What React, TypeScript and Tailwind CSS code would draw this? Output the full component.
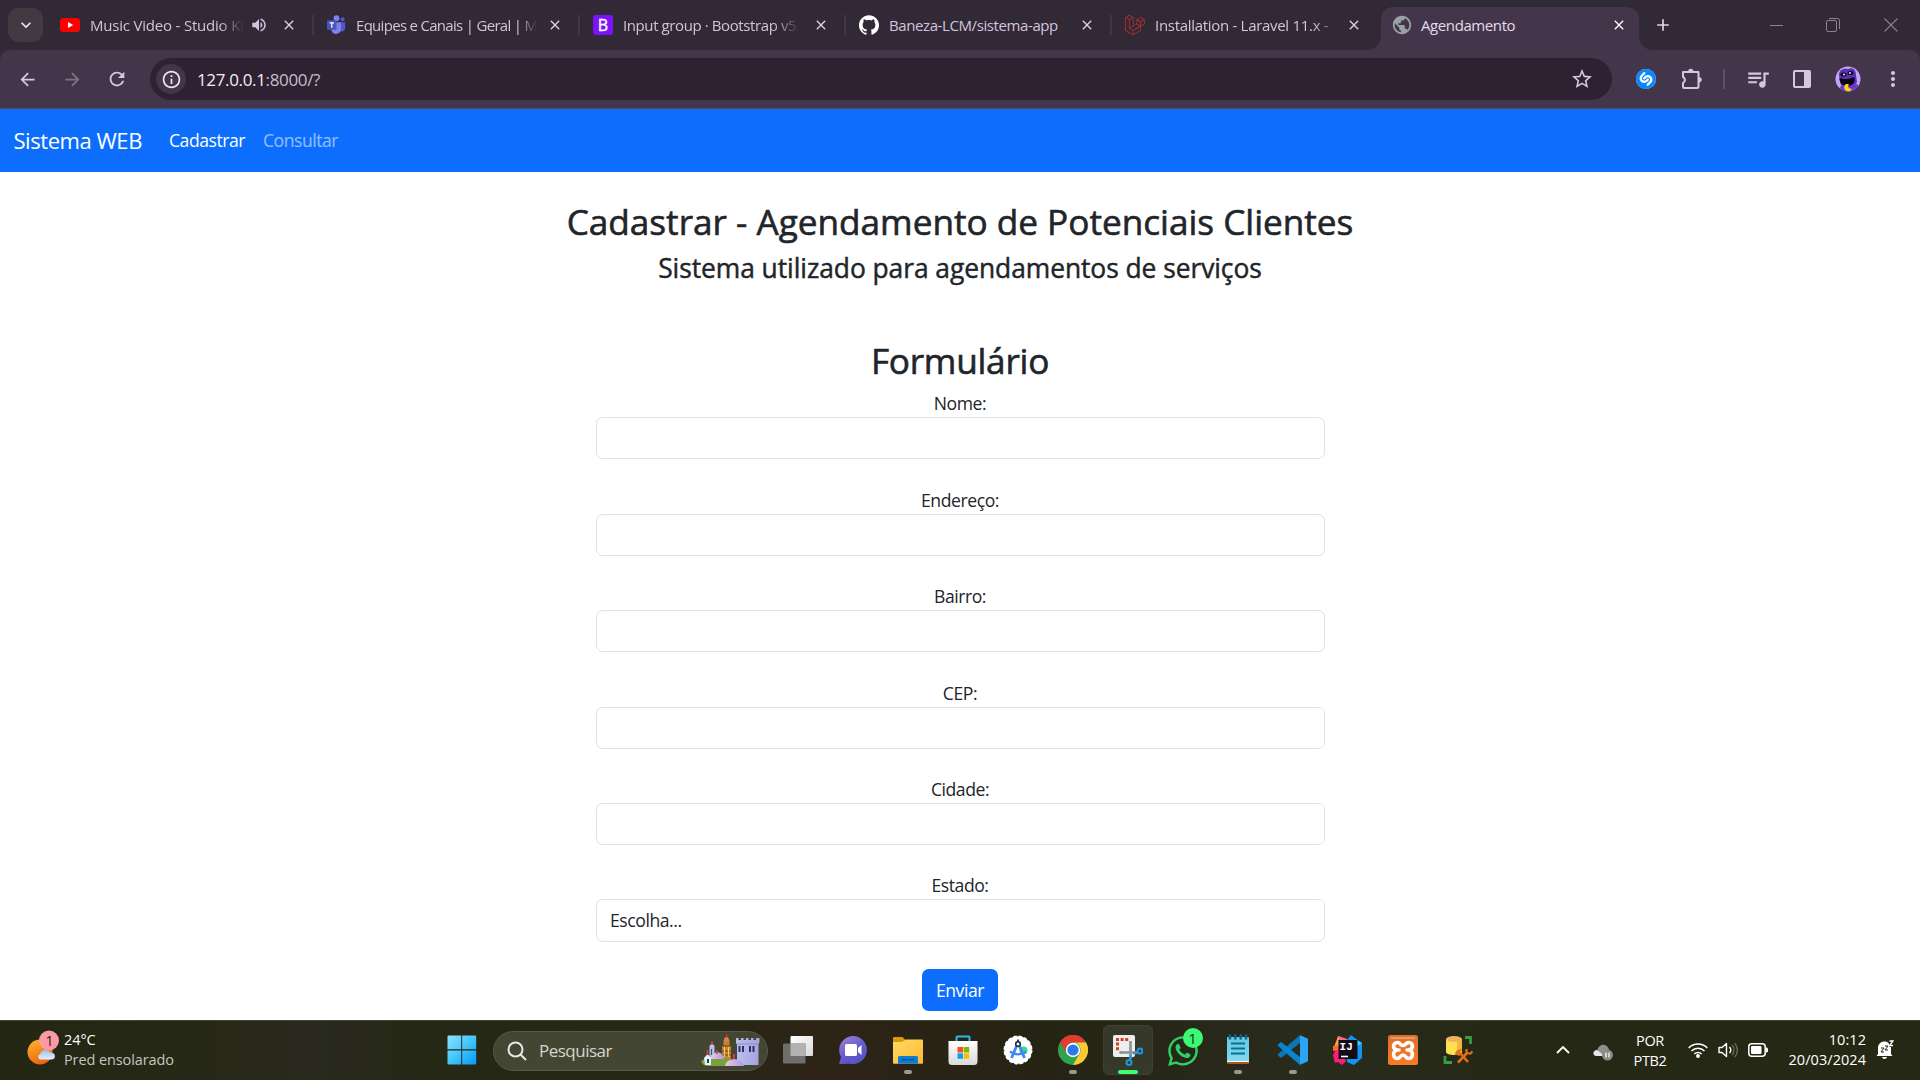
import type { ReactNode } from "react";
import { MdArrowBack, MdArrowForward, MdRefresh, MdInfoOutline, MdStarBorder, MdPublic, MdVolumeUp, MdQueueMusic, MdMoreVert, MdClose, MdAdd, MdKeyboardArrowDown } from "react-icons/md";
import { SiGithub, SiLaravel, SiShazam } from "react-icons/si";
import { FaWhatsapp } from "react-icons/fa";

const YouTube = () => (
  <svg width="20" height="20" viewBox="0 0 20 20"><rect y="3" width="20" height="14" rx="3.5" fill="#f00" /><path d="M8 7l5.2 3L8 13z" fill="#fff" /></svg>
);

const Teams = () => (
  <svg width="20" height="20" viewBox="0 0 20 20" className="-ml-px">
    <circle cx="10.5" cy="3.2" r="2.9" fill="#7b83eb" /><circle cx="16.6" cy="4.3" r="2" fill="#5059c9" />
    <path d="M13 7.2h6.2v6a3.3 3.3 0 0 1-6.2 1.6z" fill="#5059c9" /><path d="M6 7.2h9v7a5 5 0 0 1-9.6 1.6z" fill="#7b83eb" />
    <rect x="1" y="5.3" width="9.5" height="9.5" rx="1" fill="#4b53bc" />
    <path d="M3.6 7.8h4.4M5.8 7.8v5" stroke="#fff" strokeWidth="1.2" />
  </svg>
);

const BootstrapLogo = () => (
  <div className="grid h-5 w-5 place-items-center rounded-[3px] bg-[#7b12f8] text-[16px] leading-none text-white [-webkit-text-stroke:0.4px]">B</div>
);

const Globe = () => <MdPublic size={22} className="-mx-px text-[#9aa0a6]" />;

type TabProps = { icon: ReactNode; title: string; tracking: string; fade?: string; sound?: boolean; width: string };

function Tab({ icon, title, tracking, fade, sound, width }: TabProps) {
  return (
    <div className={`flex h-[50px] shrink-0 items-center pl-[13px] ${width}`}>
      {icon}
      <div className="ml-[10px] flex h-6 w-[179px] items-center">
        <div className={`text-[15px] leading-6 whitespace-nowrap text-[#d5c2dc] ${tracking} ${fade ?? ""}`}>{title}</div>
      </div>
      {sound && <MdVolumeUp size={18} className="-ml-[19px] text-[#d5c2dc]" />}
      <MdClose size={16} className="ml-auto mr-[15px] shrink-0 text-[#e0d0e6]" />
      <div className="h-5 w-0.5 bg-[#43383f]" />
    </div>
  );
}

function TabStrip() {
  return (
    <div className="flex h-[50px] items-center bg-[#312936]">
      <div className="ml-2 mr-1 grid h-[34px] w-[35px] shrink-0 place-items-center rounded-[11px] bg-[#423a42]">
        <MdKeyboardArrowDown size={20} className="text-[#eee6ef]" />
      </div>
      <Tab icon={<YouTube />} title="Music Video - Studio Ki" tracking="tracking-[-0.2px]" fade="mask-r-from-84%" sound width="w-[267px]" />
      <Tab icon={<Teams />} title="Equipes e Canais | Geral | M" tracking="tracking-[-0.7px]" fade="mask-r-from-90%" width="w-[266px]" />
      <Tab icon={<BootstrapLogo />} title="Input group · Bootstrap v5." tracking="tracking-[-0.4px]" fade="mask-r-from-85%" width="w-[266px]" />
      <Tab icon={<SiGithub size={20} className="shrink-0 text-white" />} title="Baneza-LCM/sistema-app" tracking="tracking-[-0.4px]" width="w-[266px]" />
      <div className="mr-px flex h-[50px] w-[268px] shrink-0 items-center pl-[13px]">
        <SiLaravel size={20} className="shrink-0 text-[#d32f2b]" />
        <div className="ml-[10px] text-[15px] tracking-[-0.3px] whitespace-nowrap text-[#d5c2dc] mask-r-from-90% mask-r-to-[110%]">Installation - Laravel 11.x -</div>
        <MdClose size={16} className="mr-[18px] ml-auto shrink-0 text-[#e0d0e6]" />
      </div>
      <div className="relative mt-[7px] flex h-[43px] w-[258px] shrink-0 items-center rounded-t-xl bg-[#43364a] pb-[7px] pl-[11px]">
        <div className="absolute bottom-0 -left-[14px] h-[14px] w-[14px] bg-[#43364a]"><div className="h-full rounded-br-[14px] bg-[#312936]" /></div>
        <div className="absolute -right-[14px] bottom-0 h-[14px] w-[14px] bg-[#43364a]"><div className="h-full rounded-bl-[14px] bg-[#312936]" /></div>
        <Globe />
        <div className="ml-[9px] text-[15px] tracking-[-0.4px] text-[#e6d9ea]">Agendamento</div>
        <MdClose size={16} className="mr-[12px] ml-auto text-white" />
      </div>
      <MdAdd size={20} className="ml-[14px] text-[#e0d6e2]" />
      <div className="mr-[22px] ml-auto flex items-center">
        <div className="h-px w-[13px] bg-[#8b848e]" />
        <svg width="14" height="14" viewBox="0 0 14 14" fill="none" stroke="#8b848e" className="ml-[43px]"><rect x=".5" y="2.5" width="10" height="11" rx="1.5" /><path d="M3 .5h8.500a2 2 0 0 1 2 2V11" /></svg>
        <svg width="14" height="14" viewBox="0 0 14 14" stroke="#8b848e" strokeWidth="1.1" className="ml-[44px]"><path d="M.5.5l13 13M13.500.5l-13 13" /></svg>
      </div>
    </div>
  );
}

const Puzzle = () => (
  <svg width="22" height="22" viewBox="0 0 22 22" fill="none" stroke="#d8c6df" strokeWidth="2" strokeLinejoin="round">
    <path d="M2 4h15.500v14.500a1.500 1.500 0 0 1-1.500 1.500H3.500A1.500 1.500 0 0 1 2 18.500V15a3.300 3.300 0 0 0 0-6z" />
    <path d="M7.500 3.500a2.300 2.300 0 0 1 4.600 0zM18 9.500a2.300 2.300 0 0 1 0 4.600z" fill="#d8c6df" strokeWidth="1" />
  </svg>
);

const Avatar = () => (
  <svg width="26" height="26" viewBox="0 0 26 26">
    <clipPath id="av"><circle cx="13" cy="13" r="12.500" /></clipPath>
    <g clipPath="url(#av)">
      <rect width="26" height="26" fill="#c7a3f5" />
      <path d="M4 9C4 4 8 2 13 3c5-2 8 1 8 6l1 7-5 9H8l-3-9z" fill="#5c30b5" />
      <path d="M5 26c-1-5 1-7 5-8l9-1c5 1 6 5 5 9z" fill="#7136cf" />
      <path d="M4.500 12c6 2 10 1 15-1 1 6-2 9-7 9-5 0-8-3-8-8z" fill="#080310" />
      <ellipse cx="8.500" cy="8.500" rx="3" ry="2" fill="#0c0618" /><ellipse cx="15.500" cy="7" rx="3" ry="2" fill="#0c0618" />
      <circle cx="9" cy="8.500" r=".9" fill="#fff" /><circle cx="15" cy="7" r=".9" fill="#fff" />
      <path d="M11 18a4 4 0 1 0 6 4.500c-3 1-5-1.500-3-4.500z" fill="#f9d90b" />
    </g>
  </svg>
);

function Toolbar() {
  return (
    <div className="bg-[#312936]">
      <div className="flex h-[59px] items-center rounded-t-[10px] border-b border-[#554a50] bg-[#43364a] text-[#d8c6df]">
        <MdArrowBack size={21} className="ml-[17px]" />
        <MdArrowForward size={21} className="ml-[24px] text-[#7f7385]" />
        <MdRefresh size={22} className="ml-[23px]" />
        <div className="ml-[22px] flex h-[42px] w-[1462px] items-center rounded-full bg-[#2e2132]">
          <div className="ml-[6px] grid h-[30px] w-[30px] place-items-center rounded-full bg-[#43364a]"><MdInfoOutline size={21} className="text-[#eee3f0]" /></div>
          <div className="ml-[11px] pt-px text-[17px] tracking-[-0.35px] text-[#c9bccd]"><span className="text-[#f4edf5]">127.0.0.1</span>:8000/?</div>
          <MdStarBorder size={24} className="mr-[18px] ml-auto" />
        </div>
        <div className="ml-[24px] h-[20px] w-[20px] rounded-full bg-white"><SiShazam size={20} className="text-[#0a88ff]" /></div>
        <div className="ml-[25px]"><Puzzle /></div>
        <div className="ml-[20px] h-5 w-0.5 bg-[#5e5065]" />
        <MdQueueMusic size={26} className="ml-[20px]" />
        <svg width="18" height="18" viewBox="0 0 18 18" className="ml-[22px]"><rect x="1" y="1" width="16" height="16" rx="1" fill="none" stroke="#d8c6df" strokeWidth="2" /><path d="M11 1h6v16h-6z" fill="#d8c6df" /></svg>
        <div className="ml-[24px]"><Avatar /></div>
        <MdMoreVert size={24} className="ml-[20px]" />
      </div>
    </div>
  );
}

function Navbar() {
  return (
    <nav className="flex h-[63px] items-center bg-[#0d6efd] pl-[13.500px] text-white">
      <div className="w-[155.500px] text-[22px] tracking-[-0.45px] whitespace-nowrap">Sistema WEB</div>
      <div className="w-[94px] text-[17.6px] tracking-[-0.48px]">Cadastrar</div>
      <div className="text-[17.6px] tracking-[-0.48px] text-white/55">Consultar</div>
    </nav>
  );
}

const fields = ["Nome:", "Endereço:", "Bairro:", "CEP:", "Cidade:"];

function Page() {
  return (
    <main className="flex h-[848px] flex-col items-center bg-white pt-[28px] text-[#212529]">
      <h1 className="text-[35.2px] leading-[42px] tracking-[-0.02px] [-webkit-text-stroke:0.6px]">Cadastrar - Agendamento de Potenciais Clientes</h1>
      <h2 className="mt-[10px] text-[26.4px] leading-[32px] tracking-[-0.06px] [-webkit-text-stroke:0.45px]">Sistema utilizado para agendamentos de serviços</h2>
      <h1 className="mt-[55px] text-[35.2px] leading-[42px] tracking-[-0.25px] [-webkit-text-stroke:0.6px]">Formulário</h1>
      <form className="mt-[9px] ml-px flex w-[729px] flex-col items-center text-[17.6px] leading-[26px] tracking-[-0.44px]">
        {fields.map((f) => (
          <div key={f} className="flex h-[96.500px] w-full flex-col items-center">
            <label className="-ml-px">{f}</label>
            <input className="mt-px h-[42px] w-full rounded-[6.600px] border border-[#dee2e6]" />
          </div>
        ))}
        <label className="-mt-px -ml-px">Estado:</label>
        <div className="mt-px flex h-[43px] w-full items-center rounded-[6.600px] border border-[#dee2e6] pl-[13px]">Escolha...</div>
        <button type="button" className="mt-[27px] -ml-px h-[42px] w-[76px] rounded-[6.600px] bg-[#0d6efd] text-white">Enviar</button>
      </form>
    </main>
  );
}

const Weather = () => (
  <svg width="34" height="36" viewBox="0 0 34 36" className="shrink-0">
    <defs>
      <linearGradient id="sun" x2=".4" y2="1"><stop stopColor="#f9b931" /><stop offset="1" stopColor="#f0650d" /></linearGradient>
      <linearGradient id="cl" y2="1" x2="0"><stop stopColor="#9cc1ee" /><stop offset="1" stopColor="#e3eefc" /></linearGradient>
    </defs>
    <circle cx="13" cy="22" r="12.500" fill="url(#sun)" />
    <path d="M13 29.500a3 3 0 0 1 0-5.500c2-5 8-5 10-1.500 6-.5 6.500 6.500 2 7z" fill="url(#cl)" />
    <circle cx="22" cy="10.500" r="10" fill="#fc9aa3" />
    <text x="22.500" y="15.500" textAnchor="middle" fontSize="14" fill="#222">1</text>
  </svg>
);

const WindowsLogo = () => (
  <svg width="30" height="30" viewBox="0 0 30 30">
    <defs><linearGradient id="wn" x2="1" y2="1"><stop stopColor="#8ae4fd" /><stop offset=".55" stopColor="#3cc2fc" /><stop offset="1" stopColor="#0896fb" /></linearGradient></defs>
    <path d="M.5 1.500a1 1 0 0 1 1-1H14.200V14.200H.5zM15.200.5h13a1 1 0 0 1 1 1v12.700h-14zM.5 15.500H14.200v14H1.500a1 1 0 0 1-1-1zM15.200 15.500h14v13a1 1 0 0 1-1 1h-13z" fill="url(#wn)" />
  </svg>
);

const Castle = () => (
  <svg width="59" height="33" viewBox="0 0 59 33">
    <defs>
      <linearGradient id="cw"><stop stopColor="#b9c0ee" /><stop offset="1" stopColor="#a9a0e0" /></linearGradient>
      <linearGradient id="dome"><stop stopColor="#f0c6df" /><stop offset="1" stopColor="#a89ae0" /></linearGradient>
    </defs>
    <path d="M8.500 12l2.500-3 2.500 3v14h-5z" fill="#b5c8e8" /><path d="M11 7v4" stroke="#dc3b58" strokeWidth="1.500" /><path d="M10.500 15v6" stroke="#3d4c83" strokeWidth="1.200" />
    <path d="M22.500 7h6v5h1.500v14h-9V12h1.500z" fill="#c18331" /><path d="M22 12h7M21 17h9M21 21h9" stroke="#6c3c2a" /><path d="M24 3h3l1.500 4h-6z" fill="#e3833a" /><path d="M25.500 0v4" stroke="#d43256" strokeWidth="1.200" />
    <path d="M23.500 13v10M27.500 13v10" stroke="#f8ce4f" strokeWidth="1.200" />
    <path d="M0 27c5-4 16-4 28-2l4 7H8c-5 0-7-2-8-5z" fill="#79a23b" />
    <path d="M10 25c1-9 12-9 13 0z" fill="url(#dome)" /><path d="M16 16v4" stroke="#dc3b58" strokeWidth="1.600" />
    <path d="M3 24l3.500-4 3.500 4v7H4z" fill="#e3f2fb" /><path d="M6.500 16v5" stroke="#dc3b58" strokeWidth="1.600" /><path d="M7 25v4" stroke="#263c70" strokeWidth="2" />
    <path d="M35 4h2.500v2H40V4h2.500v2H45V4h2.500v2H50V4h2.500v2H55V4h3.500v4l-1 3v20H36V11l-1-2z" fill="url(#cw)" /><path d="M36 10h22" stroke="#8088c4" strokeWidth=".8" />
    <path d="M38.500 12v6M42 12v6M49 12v6M52.500 12v6" stroke="#263064" strokeWidth="2" />
    <path d="M24 32c1-9 17-9 19 0z" fill="url(#dome)" /><path d="M33 20v5" stroke="#dc3b58" strokeWidth="1.800" />
  </svg>
);

const TaskView = () => (
  <svg width="30" height="30" viewBox="0 0 30 30">
    <defs><linearGradient id="tv" x2="1" y2="1"><stop stopColor="#fff" /><stop offset="1" stopColor="#dadada" /></linearGradient></defs>
    <rect x="7.500" y="1" width="22.500" height="20" rx="1" fill="url(#tv)" /><rect x="0" y="8.500" width="22.500" height="20" rx="1" fill="#6e6e6c" /><path d="M7.500 8.500h15V21h-15z" fill="#b2b2b2" />
  </svg>
);

const Chat = () => (
  <svg width="30" height="30" viewBox="0 0 30 30">
    <defs><linearGradient id="ch" x2=".6" y2="1"><stop stopColor="#a084d2" /><stop offset=".6" stopColor="#665bcc" /><stop offset="1" stopColor="#5355c8" /></linearGradient></defs>
    <path d="M15 1a14 14 0 1 1-3 27.700L1 29l2-7A14 14 0 0 1 15 1z" fill="url(#ch)" />
    <rect x="7" y="9" width="12" height="12" rx="1.500" fill="#fff" /><path d="M20 13l3.500-3v10L20 17z" fill="#fff" />
  </svg>
);

const Folder = () => (
  <svg width="30" height="30" viewBox="0 0 30 30">
    <defs><linearGradient id="fo" x2="1" y2="1"><stop stopColor="#ffdb63" /><stop offset="1" stopColor="#fdb933" /></linearGradient></defs>
    <path d="M0 3a1 1 0 0 1 1-1h8.500l3 3V9H0z" fill="#d99a04" /><path d="M0 7h9l4-2.500h16a1 1 0 0 1 1 1V28a.8.8 0 0 1-.8.800H.8A.8.8 0 0 1 0 28z" fill="url(#fo)" />
    <path d="M5 28.800V22.500a1.500 1.500 0 0 1 1.500-1.500h17a1.500 1.500 0 0 1 1.500 1.500v6.300z" fill="#0f7ccf" /><path d="M8.500 24.700h13" stroke="#08508f" strokeWidth="1.200" />
  </svg>
);

const Store = () => (
  <svg width="30" height="32" viewBox="0 0 30 32">
    <defs><linearGradient id="st" x2="0" y2="1"><stop stopColor="#fff" /><stop offset="1" stopColor="#d9d9dc" /></linearGradient></defs>
    <path d="M8.500 8V3.500a1 1 0 0 1 1-1h11a1 1 0 0 1 1 1V8" fill="none" stroke="#29bcec" strokeWidth="2" />
    <path d="M.5 7h29v20.500a3.500 3.500 0 0 1-3.500 3.500H4a3.500 3.500 0 0 1-3.500-3.500z" fill="url(#st)" />
    <path d="M9.500 13H15v5.500H9.500z" fill="#f25022" /><path d="M15.700 13h5.500v5.500h-5.500z" fill="#7fba00" /><path d="M9.500 19.300H15v5.500H9.500z" fill="#00a4ef" /><path d="M15.700 19.300h5.500v5.500h-5.500z" fill="#ffb900" />
  </svg>
);

const AndroidStudio = () => (
  <svg width="30" height="30" viewBox="0 0 30 30">
    <circle cx="15" cy="15" r="13.800" fill="#fff" /><circle cx="15" cy="15" r="13.700" fill="none" stroke="#fff" strokeWidth="1.600" strokeDasharray="3.500 1.900" />
    <circle cx="20.500" cy="15.500" r="4" fill="#39d98a" />
    <path d="M14 10L8.500 23M16 10l5.500 13" fill="none" stroke="#4285f4" strokeWidth="2.800" /><path d="M7 16.500c5 3.500 11 3.500 16 0" fill="none" stroke="#4285f4" strokeWidth="2.200" />
    <circle cx="15" cy="9" r="2.300" fill="#fff" stroke="#073042" strokeWidth="1.600" /><path d="M15 4.500v2" stroke="#073042" strokeWidth="1.800" />
  </svg>
);

const Chrome = () => (
  <svg width="30" height="30" viewBox="0 0 30 30">
    <circle cx="15" cy="15" r="15" fill="#2fa24c" />
    <path d="M2 7.500A15 15 0 0 1 28 7.500H15a7.500 7.500 0 0 0-6.500 11.250z" fill="#e33b2e" />
    <path d="M28 7.500A15 15 0 0 1 15 30l6.500-11.250A7.500 7.500 0 0 0 15 7.500z" fill="#fcc934" />
    <circle cx="15" cy="15" r="7.200" fill="#fff" /><circle cx="15" cy="15" r="5.600" fill="#2b79ea" />
  </svg>
);

const Snip = () => (
  <svg width="30" height="32" viewBox="0 0 30 32">
    <rect x="0" y="1" width="22" height="22" rx="2" fill="#eceef0" />
    <path d="M3 5.500h13M4.500 4v13" stroke="#d2411b" strokeWidth="3" strokeDasharray="3 1.600" fill="none" /><path d="M6 18.500h4" stroke="#bbb" strokeWidth="3" />
    <path d="M17.500 7v18M7 18.500h18" stroke="#8d9297" strokeWidth="2.600" />
    <circle cx="27" cy="17" r="2.500" fill="none" stroke="#2097dc" strokeWidth="2" /><path d="M20 19.500l5-1M17.500 21l-1 5" stroke="#2097dc" strokeWidth="2" /><circle cx="16" cy="28.500" r="2.500" fill="none" stroke="#2097dc" strokeWidth="2" />
  </svg>
);

const WhatsApp = () => (
  <div className="relative h-[32px] w-[32px]">
    <FaWhatsapp size={34} className="-ml-px text-[#2bd366]" />
    <div className="absolute -top-[6px] left-[16px] grid h-5 w-5 place-items-center rounded-full bg-[#3cf973] text-[15px] leading-none text-[#1d3320]">1</div>
  </div>
);

const Notepad = () => (
  <svg width="24" height="32" viewBox="0 0 24 32">
    <defs><linearGradient id="np" x2="0" y2="1"><stop stopColor="#64c9e2" /><stop offset="1" stopColor="#81daf0" /></linearGradient></defs>
    <path d="M1 26h22v4H2a1 1 0 0 1-1-1z" fill="#b2541d" /><path d="M1 24h22v4H1z" fill="#fff" /><path d="M1 4a1 1 0 0 1 1-1h20a1 1 0 0 1 1 1v23H1z" fill="url(#np)" />
    <path d="M5 9.500h14M5 14.500h14M5 19.500h14" stroke="#0c6e91" strokeWidth="2" />
    <path d="M4 1.500v3M9.300 1.500v3M14.700 1.500v3M20 1.500v3" stroke="#0c6788" strokeWidth="2.600" strokeLinecap="round" />
  </svg>
);

const VSCode = () => (
  <svg width="30" height="30" viewBox="0 0 30 30">
    <path d="M22 0v8L3 23 0 20.500V19z" fill="#0a75bb" /><path d="M22 30v-8L3 7 0 9.500V11z" fill="#0a84cf" /><path d="M21.500 0L30 3.700v22.600L21.500 30c.5-.5.500-1 .5-1.500v-27c0-.5 0-1-.5-1.500z" fill="#2aa6f2" />
  </svg>
);

const IntelliJ = () => (
  <svg width="30" height="30" viewBox="0 0 30 30">
    <path d="M5 1l8 3-2 10L1 12z" fill="#ff9f3f" /><path d="M5 1l9 3 2 8-8 1z" fill="#fd668a" />
    <path d="M14 5l4-5 5 4 6 4v15l-8 7-7-3z" fill="#1195f5" /><path d="M22 4l2 7 5-3z" fill="#36d4f7" />
    <path d="M0 20l5-10 8 16-4 4-4-3-3 1z" fill="#fb1e7b" /><path d="M0 11l5-1v5l-5 1z" fill="#fc6e2c" />
    <rect x="5.500" y="5" width="19" height="19" fill="#120c16" />
    <text x="6.600" y="15" fontSize="11" fontWeight="700" fill="#fff" fontFamily="Liberation Mono, monospace">IJ</text><path d="M8 21.500h7" stroke="#fff" strokeWidth="1.600" />
  </svg>
);

const Xampp = () => (
  <svg width="30" height="30" viewBox="0 0 30 30">
    <defs><linearGradient id="xa" x2="0" y2="1"><stop stopColor="#dc702e" /><stop offset="1" stopColor="#fa7b22" /></linearGradient></defs>
    <rect width="30" height="30" rx="2.500" fill="url(#xa)" /><path d="M3 3h24" stroke="#f6b38b" strokeWidth="1.200" />
    <path d="M9.500 15C4 14.500 4.500 7.500 9.500 7.500c3 0 2.500 3 5.500 3s2.500-3 5.500-3c5 0 5.500 7 0 7.500 5.500.5 5 8.500 0 8.500-3 0-2.500-3.500-5.500-3.500s-2.500 3.500-5.500 3.500c-5 0-5.500-8 0-8.500z" fill="none" stroke="#fff" strokeWidth="3.600" strokeLinejoin="round" />
    <path d="M9 15h3.500M17.500 15H21" stroke="#fff" strokeWidth="3" />
  </svg>
);

const DbTool = () => (
  <svg width="30" height="30" viewBox="0 0 30 30">
    <path d="M3 4v13c0 4 16 4 16 0V4z" fill="#ffe150" /><path d="M14 5v15c3 0 5-1 5-3V4z" fill="#ecb93a" /><ellipse cx="11" cy="4" rx="8" ry="3" fill="#f2b25d" />
    <path d="M22 2.500h5.500V9M2 21v6.500h7" fill="none" stroke="#399a3f" strokeWidth="2.800" />
    <path d="M15 27.500l8.500-9M25 27l-8-9" stroke="#e46f15" strokeWidth="2.600" /><path d="M12 20c0-4 3-6 7-6l-2 3 1 2-2 2-2-1z" fill="#e46f15" /><path d="M23.500 14v4l4 .5 2-2" fill="none" stroke="#e46f15" strokeWidth="2.200" />
  </svg>
);

function TaskItem({ children, state }: { children: ReactNode; state?: "open" | "active" }) {
  return (
    <div className="flex h-[59px] w-[55px] shrink-0 flex-col items-center pt-[4px]">
      <div className={`flex h-[50px] w-[50px] flex-col items-center ${state === "active" ? "rounded-md border border-[#3f4132] bg-[#36382a]" : "border border-transparent"}`}>
        <div className="grid h-[48px] shrink-0 place-items-center">{children}</div>
        {state === "open" && <div className="-mt-[4px] h-1 w-2 shrink-0 rounded-full bg-[#989a93]" />}
        {state === "active" && <div className="-mt-[4px] h-1 w-5 shrink-0 rounded-full bg-[#3ffb6d]" />}
      </div>
    </div>
  );
}

function Tray() {
  return (
    <div className="ml-auto flex h-full items-center pb-px text-white">
      <svg width="14" height="8" viewBox="0 0 14 8" fill="none" stroke="#fff" strokeWidth="1.800"><path d="M1 7l6-6 6 6" /></svg>
      <svg width="20" height="18" viewBox="0 0 20 18" className="mt-[4px] ml-[23px]">
        <path d="M4 8C5 1 13-1 16 6l-4 7z" fill="#8e8e8a" /><path d="M3 13C-1 12 0 7 4 7l8 6z" fill="#e6e6e6" />
        <circle cx="14.500" cy="12" r="5.500" fill="#888a87" /><path d="M13 9.500v5M16 9.500v5" stroke="#fff" strokeWidth="1.200" />
      </svg>
      <div className="mt-px ml-[20px] w-[34px] text-center text-[14.500px] leading-5 tracking-[-0.4px] whitespace-nowrap">POR<br />PTB2</div>
      <svg width="20" height="16" viewBox="0 0 20 16" className="ml-[21px]" fill="none" stroke="#fff" strokeWidth="1.500">
        <path d="M.7 6a13 13 0 0 1 18.600 0M3.500 9a9 9 0 0 1 13 0M6.300 12a5.200 5.200 0 0 1 7.400 0" /><circle cx="10" cy="14" r="1.200" fill="#fff" />
      </svg>
      <svg width="20" height="18" viewBox="0 0 20 18" className="ml-[10px]" fill="none" stroke="#fff" strokeWidth="1.400">
        <path d="M1 6.500h3l4.500-4v13L4 11.500H1z" strokeLinejoin="round" /><path d="M11.500 6a4.500 4.500 0 0 1 0 6" /><path d="M14 4a7 7 0 0 1 0 10M16.500 2a10 10 0 0 1 0 14" stroke="#63665a" />
      </svg>
      <svg width="20" height="14" viewBox="0 0 20 14" className="ml-[10px]"><rect x=".8" y=".8" width="16.400" height="12.400" rx="3" fill="none" stroke="#fff" strokeWidth="1.500" /><rect x="3" y="3" width="10.500" height="8" rx="1" fill="#fff" /><path d="M17.500 4.500h1.500l1 1v3l-1 1h-1.500z" fill="#fff" /></svg>
      <div className="ml-[18px] w-[80px] text-right text-[14.500px] leading-5 tracking-[0.050px] whitespace-nowrap">10:12<br />20/03/2024</div>
      <svg width="18" height="20" viewBox="0 0 18 20" className="mr-[26px] ml-[10px]">
        <path d="M2 14V8c0-4 3-6.500 6.500-6.500S15 4 15 8v6l1.500 2H.5zM6 17h5c-.5 2.500-4.500 2.500-5 0z" fill="#fff" />
        <path d="M12 0h6v7h-4.500z" fill="#252814" /><path d="M13.500 1h3.500l-3.500 4.500H17" fill="none" stroke="#fff" strokeWidth="1.300" /><path d="M5 8h3l-3 4h3M9 6h3L9 10h3" fill="none" stroke="#252814" />
      </svg>
    </div>
  );
}

function Taskbar() {
  return (
    <footer className="flex h-[60px] items-center border-t border-[#3f4632] bg-[linear-gradient(90deg,#232713_0%,#272817_12%,#29291f_16%,#252814_23%,#272716_37%,#2e2317_43%,#252414_54%,#292b1d_68%,#252814_80%)]">
      <div className="ml-[27px] flex w-[407px] items-center">
        <div className="-mt-[5px]"><Weather /></div>
        <div className="ml-[3px] pb-px text-[14.500px] leading-5 tracking-[-0.1px] whitespace-nowrap text-[#c5c6c0]"><div className="text-white">24°C</div>Pred ensolarado</div>
      </div>
      <TaskItem><WindowsLogo /></TaskItem>
      <div className="mr-[2px] ml-[4px] flex h-10 w-[275px] shrink-0 items-center rounded-full border border-[#565945] bg-[#434632] pl-[13px]">
        <svg width="20" height="20" viewBox="0 0 20 20" fill="none" stroke="#e8e8e4" strokeWidth="2"><circle cx="8.500" cy="8.500" r="7" /><path d="M13.500 13.500l5.500 5.500" /></svg>
        <div className="ml-[12px] text-[17px] tracking-[-0.500px] text-[#d4d5cd]">Pesquisar</div>
        <div className="mr-[7px] ml-auto"><Castle /></div>
      </div>
      <TaskItem><TaskView /></TaskItem>
      <TaskItem><Chat /></TaskItem>
      <TaskItem state="open"><Folder /></TaskItem>
      <TaskItem><Store /></TaskItem>
      <TaskItem><AndroidStudio /></TaskItem>
      <TaskItem state="open"><Chrome /></TaskItem>
      <TaskItem state="active"><Snip /></TaskItem>
      <TaskItem><WhatsApp /></TaskItem>
      <TaskItem state="open"><Notepad /></TaskItem>
      <TaskItem state="open"><VSCode /></TaskItem>
      <TaskItem><IntelliJ /></TaskItem>
      <TaskItem><Xampp /></TaskItem>
      <TaskItem><DbTool /></TaskItem>
      <Tray />
    </footer>
  );
}

export default function App() {
  return (
    <div className="h-[1080px] w-[1920px] overflow-hidden font-['Open_Sans','Noto_Sans',sans-serif]">
      <TabStrip />
      <Toolbar />
      <Navbar />
      <Page />
      <Taskbar />
    </div>
  );
}
